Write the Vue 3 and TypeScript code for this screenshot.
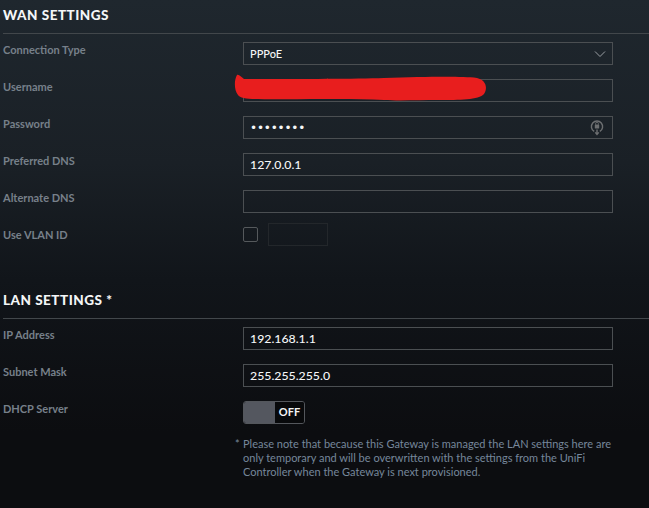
<script setup lang="ts">
interface Row {
  label: string
  value?: string
  kind: 'select' | 'text' | 'password' | 'vlan' | 'toggle'
}

const wan: Row[] = [
  { label: 'Connection Type', value: 'PPPoE', kind: 'select' },
  { label: 'Username', value: '', kind: 'text' },
  { label: 'Password', value: '••••••••', kind: 'password' },
  { label: 'Preferred DNS', value: '127.0.0.1', kind: 'text' },
  { label: 'Alternate DNS', value: '', kind: 'text' },
  { label: 'Use VLAN ID', kind: 'vlan' },
]

const lan: Row[] = [
  { label: 'IP Address', value: '192.168.1.1', kind: 'text' },
  { label: 'Subnet Mask', value: '255.255.255.0', kind: 'text' },
  { label: 'DHCP Server', kind: 'toggle' },
]

const sections = [
  { title: 'WAN SETTINGS', rows: wan },
  { title: 'LAN SETTINGS *', rows: lan },
]
</script>

<template>
  <div class="page">
    <section v-for="s in sections" :key="s.title" class="section">
      <h2 class="title">{{ s.title }}</h2>
      <div v-for="r in s.rows" :key="r.label" class="row">
        <div class="label">{{ r.label }}</div>
        <div v-if="r.kind === 'vlan'" class="vlan">
          <span class="check"></span>
          <span class="vlan-input"></span>
        </div>
        <div v-else-if="r.kind === 'toggle'" class="toggle">
          <span class="knob"></span>
          <span class="off">OFF</span>
        </div>
        <div v-else class="field" :class="{ dots: r.kind === 'password', sel: r.kind === 'select' }">
          <span class="value">{{ r.value }}</span>
          <svg v-if="r.kind === 'select'" class="chev" width="12" height="8" viewBox="0 0 12 8">
            <path d="M1 1.5 L6 6.5 L11 1.5" fill="none" stroke="#9a9fa3" stroke-width="1" />
          </svg>
          <svg v-if="r.kind === 'password'" class="lock" width="14" height="17" viewBox="0 0 14 17">
            <path d="M4.2 12.4 A5.6 5.6 0 1 1 9.8 12.4" fill="none" stroke="#6d6f71" stroke-width="1.4" />
            <rect x="4.8" y="5.4" width="4.4" height="4.2" rx="0.6" fill="#6d6f71" />
            <path d="M5.6 5.6 V4.6 A1.4 1.4 0 0 1 8.4 4.6 V5.6" fill="none" stroke="#6d6f71" stroke-width="0.9" />
            <path d="M7 10.5 V15 M5.2 13.4 L7 15.4 L8.8 13.4" fill="none" stroke="#6d6f71" stroke-width="1.4" />
          </svg>
        </div>
      </div>
    </section>
    <p class="note"><span class="star">*</span>Please note that because this Gateway is managed the LAN settings here are only temporary and will be overwritten with the settings from the UniFi Controller when the Gateway is next provisioned.</p>
    <svg class="scribble" width="254" height="30" viewBox="0 0 254 30">
      <path d="M3 1 C0 6 0 16 4 21 C6 24 12 25 24 25 C60 26 110 24 150 26 C165 27 185 26 205 26 C225 26 245 26 250 20 C254 14 252 6 243 4 C225 2 190 3 150 4 C120 5 60 5 10 5 C7 3 5 0 3 1 Z" fill="#e81e1e" />
    </svg>
  </div>
</template>

<style>
html, body { margin: 0; background: #0c0d10; }
</style>

<style scoped>
.page {
  position: relative;
  width: 649px;
  height: 508px;
  overflow: hidden;
  box-sizing: border-box;
  padding-top: 5px;
  background: linear-gradient(180deg, #1f272e 0%, #1a2026 32%, #11151a 55%, #0c0d10 85%);
  font-family: Lato, "Open Sans", sans-serif;
}
.section + .section { margin-top: 26px; }
.title {
  margin: 0 0 8px 3px;
  height: 28px;
  line-height: 20px;
  border-bottom: 1px solid #42474b;
  font-size: 13.5px;
  font-weight: 900;
  letter-spacing: 0.5px;
  color: #f4f6f7;
  box-sizing: content-box;
  padding: 0;
}
.row {
  display: flex;
  height: 37px;
  padding-left: 3px;
}
.label {
  width: 240px;
  padding-top: 1px;
  font-size: 11px;
  line-height: 14px;
  font-weight: 700;
  color: #77808a;
}
.field {
  position: relative;
  display: flex;
  align-items: center;
  box-sizing: border-box;
  width: 370px;
  height: 23px;
  padding: 0 6px;
  border: 1px solid #4b4f52;
}
.value {
  font-size: 12.3px;
  font-weight: 500;
  color: #f6f7f8;
}
.sel .value { font-size: 11px; }
.dots .value {
  font-family: "DejaVu Sans", sans-serif;
  font-size: 12px;
  letter-spacing: -0.2px;
}
.chev { position: absolute; right: 6px; top: 7px; }
.lock { position: absolute; right: 8px; top: 2px; }
.vlan {
  display: flex;
  align-items: center;
  gap: 10px;
  height: 22px;
  margin-top: -4px;
}
.check {
  box-sizing: border-box;
  width: 15px;
  height: 15px;
  border: 1px solid #55595c;
  border-radius: 2px;
}
.vlan-input {
  box-sizing: border-box;
  width: 60px;
  height: 23px;
  border: 1px solid #23272b;
}
.toggle {
  display: flex;
  box-sizing: border-box;
  width: 62px;
  height: 23px;
  border: 1px solid #54575c;
  border-radius: 3px;
  overflow: hidden;
}
.knob { width: 31px; background: #54575f; }
.off {
  flex: 1;
  background: #08090b;
  color: #f2f4f5;
  font-size: 11px;
  font-weight: 700;
  line-height: 19px;
  text-align: center;
}
.note {
  position: relative;
  width: 372px;
  margin: -1px 0 0 243px;
  font-size: 11px;
  line-height: 14px;
  color: #76879b;
}
.star { position: absolute; left: -8px; top: 0; }
.scribble { position: absolute; left: 234px; top: 74px; pointer-events: none; }
</style>
